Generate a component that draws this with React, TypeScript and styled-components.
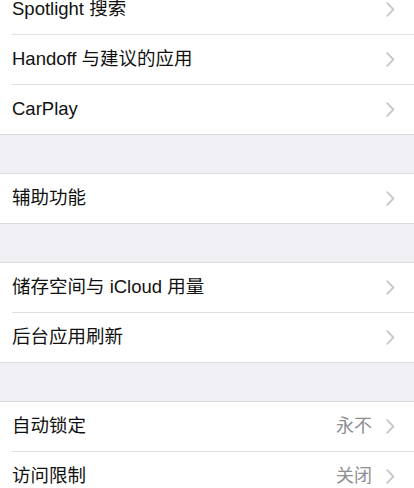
import styled, { createGlobalStyle } from 'styled-components';

const GlobalStyle = createGlobalStyle`
  html, body {
    margin: 0;
    padding: 0;
    background: #efeff4;
    overflow: hidden;
  }
  body {
    font-family: "Liberation Sans", "Noto Sans CJK SC", sans-serif;
    -webkit-font-smoothing: antialiased;
  }
`;

interface Item {
  label: string;
  value?: string;
}

const groups: Item[][] = [
  [{ label: 'Spotlight 搜索' }, { label: 'Handoff 与建议的应用' }, { label: 'CarPlay' }],
  [{ label: '辅助功能' }],
  [{ label: '储存空间与 iCloud 用量' }, { label: '后台应用刷新' }],
  [
    { label: '自动锁定', value: '永不' },
    { label: '访问限制', value: '关闭' },
  ],
];

export default function App() {
  return (
    <>
      <GlobalStyle />
      <Page>
        {groups.map((items, gi) => (
          <Group key={gi}>
            {items.map((item, i) => (
              <Row key={item.label} last={i === items.length - 1}>
                <Label>{item.label}</Label>
                <Right>
                  {item.value && <Value>{item.value}</Value>}
                  <Chevron />
                </Right>
              </Row>
            ))}
          </Group>
        ))}
      </Page>
    </>
  );
}

function Chevron() {
  return (
    <svg width="9" height="15" viewBox="0 0 9 15" fill="none">
      <path
        d="M1.2 1.2 L7.4 7.5 L1.2 13.8"
        stroke="#c7c7cc"
        strokeWidth="1.8"
        strokeLinecap="round"
        strokeLinejoin="round"
      />
    </svg>
  );
}

const Page = styled.div`
  display: flex;
  flex-direction: column;
  gap: 38px;
  margin-top: -16px;
  padding-bottom: 40px;
`;

const Group = styled.div`
  background: #ffffff;
  border-top: 1px solid #dcdce0;
  border-bottom: 1px solid #dcdce0;
`;

const Row = styled.div<{ last: boolean }>`
  position: relative;
  display: flex;
  align-items: center;
  justify-content: space-between;
  height: 49px;
  padding: 0 19px 0 12px;
  border-bottom: ${({ last }) => (last ? 'none' : '1px solid transparent')};

  &::after {
    content: '';
    display: ${({ last }) => (last ? 'none' : 'block')};
    position: absolute;
    left: 12px;
    right: 0;
    bottom: -1px;
    height: 1px;
    background: #e0e0e4;
  }
`;

const Label = styled.span`
  font-size: 18.5px;
  line-height: 22px;
  margin-bottom: 1px;
  color: #111111;
`;

const Right = styled.div`
  display: flex;
  align-items: center;
  gap: 14px;
`;

const Value = styled.span`
  font-size: 18px;
  line-height: 22px;
  margin-bottom: 1px;
  color: #8e8e93;
`;
